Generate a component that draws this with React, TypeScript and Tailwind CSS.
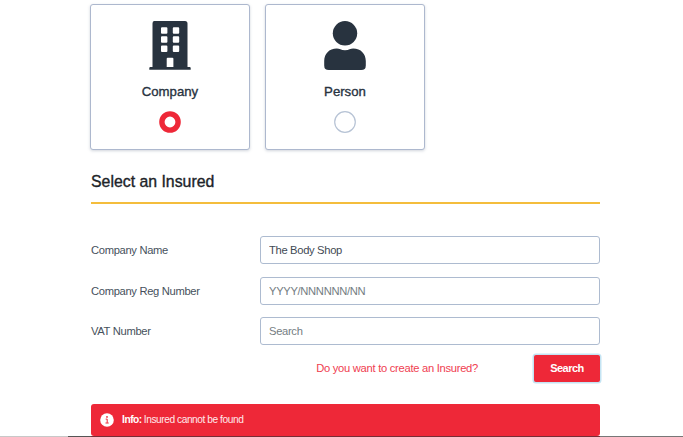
import React from "react";

function BuildingIcon() {
  return (
    <svg viewBox="0 0 42 49" className="h-[49px] w-[42px] shrink-0" fill="#28333f">
      <path
        fillRule="evenodd"
        d="M5 0H36Q38.5 0 38.5 2.5V46H40.5Q41.7 46 41.7 47V48.8H.3V47Q.3 46 1.5 46H3.5V2.5Q3.5 0 5 0ZM13 6.2Q12 6.2 12 7.2V11.7Q12 12.7 13 12.7H17.4Q18.4 12.7 18.4 11.7V7.2Q18.4 6.2 17.4 6.2ZM24.8 6.2Q23.8 6.2 23.8 7.2V11.7Q23.8 12.7 24.8 12.7H29.2Q30.2 12.7 30.2 11.7V7.2Q30.2 6.2 29.2 6.2ZM13 15.3Q12 15.3 12 16.3V20.8Q12 21.8 13 21.8H17.4Q18.4 21.8 18.4 20.8V16.3Q18.4 15.3 17.4 15.3ZM24.8 15.3Q23.8 15.3 23.8 16.3V20.8Q23.8 21.8 24.8 21.8H29.2Q30.2 21.8 30.2 20.8V16.3Q30.2 15.3 29.2 15.3ZM13 24.4Q12 24.4 12 25.4V29.9Q12 30.9 13 30.9H17.4Q18.4 30.9 18.4 29.9V25.4Q18.4 24.4 17.4 24.4ZM24.8 24.4Q23.8 24.4 23.8 25.4V29.9Q23.8 30.9 24.8 30.9H29.2Q30.2 30.9 30.2 29.9V25.4Q30.2 24.4 29.2 24.4ZM18.7 36.8Q17.7 36.8 17.7 37.8V46H24.4V37.8Q24.4 36.8 23.4 36.8Z"
      />
    </svg>
  );
}

function PersonIcon() {
  return (
    <svg viewBox="0 0 42 49" className="h-[49px] w-[42px] shrink-0" fill="#28333f">
      <circle cx="21" cy="12.3" r="12.2" />
      <path d="M12.8 27.5C15.5 27.5 17 29.2 21 29.2S26.5 27.5 29.2 27.5C37 27.5 41.8 33 41.8 40V44.4Q41.8 49 37.2 49H4.8Q.2 49 .2 44.4V40C.2 33 5 27.5 12.8 27.5Z" />
    </svg>
  );
}

function TypeCard({ label, icon, selected }: { label: string; icon: React.ReactNode; selected?: boolean }) {
  return (
    <button className="flex h-[146px] w-[160px] flex-col items-center rounded-[3px] border border-[#adb8ce] bg-white pt-[16px] shadow-[0_1px_3px_rgba(90,105,130,0.28)]">
      {icon}
      <span className="mt-[13px] text-[13.2px] leading-[18px] text-[#28333f] [-webkit-text-stroke:0.35px_#28333f]">{label}</span>
      <svg viewBox="0 0 22 22" className="mt-[10px] size-[22px] shrink-0" fill="none">
        {selected ? (
          <circle cx="11" cy="11" r="8.1" stroke="#ee2838" strokeWidth="5.4" />
        ) : (
          <circle cx="11" cy="11" r="10.3" stroke="#b7c3d5" strokeWidth="1.2" />
        )}
      </svg>
    </button>
  );
}

function Field({ label, value, placeholder }: { label: string; value?: string; placeholder?: string }) {
  return (
    <label className="flex h-[28px] items-center text-[11.2px] tracking-[-0.32px] text-[#46515c]">
      <span className="w-[169px] pt-px">{label}</span>
      <input
        className="h-[28px] w-[340px] rounded-[3px] border border-[#adbbd0] bg-white px-[8px] tracking-[-0.32px] text-[#3f4a54] outline-none placeholder:text-[#747d82]"
        defaultValue={value}
        placeholder={placeholder}
      />
    </label>
  );
}

export default function App() {
  return (
    <div className="flex h-[437px] w-[683px] flex-col overflow-hidden bg-white font-['Liberation_Sans',Arial,sans-serif]">
      <main className="ml-[91px] flex h-[436px] w-[509px] shrink-0 flex-col">
        <div className="-ml-px flex gap-[15px] pt-[4px]">
          <TypeCard label="Company" icon={<BuildingIcon />} selected />
          <TypeCard label="Person" icon={<PersonIcon />} />
        </div>
        <h2 className="mt-[21px] h-[33px] border-b-2 border-[#f4bd3c] text-[15.85px] leading-[22px] text-[#202328] [-webkit-text-stroke:0.35px_#202328]">
          Select an Insured
        </h2>
        <form className="mt-[32px] flex flex-col gap-[12.5px]">
          <Field label="Company Name" value="The Body Shop" />
          <Field label="Company Reg Number" placeholder="YYYY/NNNNNN/NN" />
          <Field label="VAT Number" placeholder="Search" />
        </form>
        <div className="mt-[10px] flex h-[27px] items-center justify-end">
          <a className="mr-[56px] text-[11.2px] tracking-[-0.28px] text-[#ef4050]">Do you want to create an Insured?</a>
          <button className="h-[27px] w-[66px] rounded-[2px] bg-[#ee2838] text-[11px] font-bold tracking-[-0.5px] text-white shadow-[0_0_0_1.5px_#c4e4f3]">
            Search
          </button>
        </div>
        <div className="mt-auto flex h-[32px] items-center rounded-[3px] bg-[#ee2838] pl-[9px] text-[10.2px] tracking-[-0.45px] text-[#ffe9eb]">
          <svg viewBox="0 0 14 14" className="mr-[8px] size-[14px]">
            <circle cx="7" cy="7" r="6.8" fill="white" />
            <circle cx="7" cy="3.9" r=".9" fill="#ee2838" />
            <path d="M5.7 6.1H7.2V9.8M5.5 10H8.7" fill="none" stroke="#ee2838" />
          </svg>
          <b className="mr-[2px] text-white">Info:</b>
          <span>Insured cannot be found</span>
        </div>
      </main>
      <div className="flex h-px shrink-0">
        <div className="w-[68px] bg-[#c8c8c8]" />
        <div className="w-[23px] bg-[#555]" />
        <div className="w-[509px] bg-[#782c36]" />
        <div className="flex-1 bg-[#777]" />
      </div>
    </div>
  );
}
